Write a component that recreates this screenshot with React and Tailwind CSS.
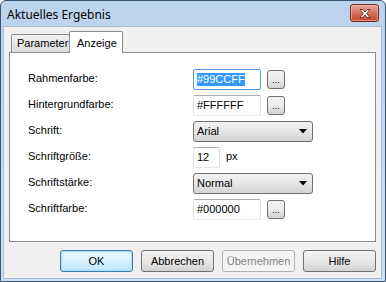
import React from 'react';

const UI = { fontFamily: '"Liberation Sans", Arial, sans-serif' };

function CloseButton() {
  return (
    <div className="mt-[3px] mr-[6px] w-[29px] h-[18px] rounded-[3px] border border-[#6e2b22] bg-gradient-to-b from-[#e9a899] via-[#d4705c] to-[#c5452d] flex items-center justify-center shadow-[inset_0_0_0_1px_rgba(255,210,200,0.5)]">
      <svg width="14" height="11" viewBox="0 0 14 11">
        <path
          d="M2 1.5 L4.8 1.5 L7 4 L9.2 1.5 L12 1.5 L8.6 5.5 L12 9.5 L9.2 9.5 L7 7 L4.8 9.5 L2 9.5 L5.4 5.5 Z"
          fill="#ffffff"
          stroke="#5a2a24"
          strokeWidth="0.9"
          strokeLinejoin="round"
        />
      </svg>
    </div>
  );
}

function TextBox({ value, width = 'w-[68px]', focused = false }) {
  return (
    <div
      className={`${width} h-[21px] rounded-[2px] border bg-white flex items-center px-[3px] text-[11px] text-black ${
        focused ? 'border-[#569de5]' : 'border-t-[#abadb3] border-x-[#dbdfe6] border-b-[#e3e9ef]'
      }`}
    >
      {focused ? <span className="bg-[#3399ff] text-white leading-[13px]">{value}</span> : value}
    </div>
  );
}

function DotsButton() {
  return (
    <div className="ml-[6px] w-[18px] h-[19px] rounded-[3px] border border-[#707070] bg-gradient-to-b from-[#f2f2f2] via-[#ebebeb] to-[#d4d4d4] flex items-end justify-center pb-[3px] text-[9px] leading-none text-black">
      ...
    </div>
  );
}

function Combo({ value }) {
  return (
    <div className="w-[120px] h-[21px] rounded-[3px] border border-[#707070] bg-gradient-to-b from-[#f2f2f2] via-[#e6e6e6] to-[#d3d3d3] flex items-center justify-between pl-[3px] pr-[5px] text-[11px] text-black">
      <span>{value}</span>
      <svg width="8" height="5" viewBox="0 0 8 5">
        <path d="M0 0 L8 0 L4 4.5 Z" fill="#000" />
      </svg>
    </div>
  );
}

function Row({ label, children }) {
  return (
    <div className="flex items-center h-[21px] mb-[5px]">
      <div className="w-[165px] pb-[3px] text-[11px] text-black">{label}</div>
      <div className="flex items-center">{children}</div>
    </div>
  );
}

function DialogButton({ children, variant }) {
  if (variant === 'default') {
    return (
      <div className="w-[73px] h-[22px] rounded-[3px] border border-[#3c7fb1] bg-gradient-to-b from-[#eaf6fd] via-[#d9f0fc] to-[#bee6fd] shadow-[inset_0_0_0_1px_#9fe0fb] flex items-center justify-center text-[11px] text-black">
        {children}
      </div>
    );
  }
  if (variant === 'disabled') {
    return (
      <div className="w-[73px] h-[22px] rounded-[3px] border border-[#adb2b5] bg-[#f4f4f4] flex items-center justify-center text-[11px] text-[#838383]">
        {children}
      </div>
    );
  }
  return (
    <div className="w-[73px] h-[22px] rounded-[3px] border border-[#707070] bg-gradient-to-b from-[#f2f2f2] via-[#e8e8e8] to-[#d2d2d2] flex items-center justify-center text-[11px] text-black">
      {children}
    </div>
  );
}

export default function App() {
  return (
    <div
      className="w-[386px] h-[282px] rounded-t-[6px] border border-[#3d5372] bg-gradient-to-b from-[#bcd3ec] to-[#cfe0f2] flex flex-col overflow-hidden"
      style={UI}
    >
      {/* Title bar */}
      <div className="h-[25px] flex items-start justify-between">
        <div
          className="pl-[6px] pt-[5px] text-[12px] text-black"
          style={{ fontFamily: '"Noto Sans", "Open Sans", sans-serif' }}
        >
          Aktuelles Ergebnis
        </div>
        <CloseButton />
      </div>

      {/* Client area */}
      <div className="flex-1 ml-[2px] mr-[3px] mb-[2px] bg-[#f0f0f0] border border-[#a7bcd6] flex flex-col px-[5px]">
        {/* Tabs */}
        <div className="flex items-end h-[25px] pl-[2px] relative z-10">
          <div className="w-[59px] h-[18px] border border-b-0 border-[#898c95] rounded-t-[2px] bg-gradient-to-b from-[#f2f2f2] to-[#dcdcdc] flex items-center pl-[5px] text-[11px] text-black">
            Parameter
          </div>
          <div className="w-[54px] h-[22px] -ml-[1px] border border-b-0 border-[#898c95] rounded-t-[2px] bg-white flex items-start pt-[3px] pl-[7px] text-[11px] text-black mb-[-1px]">
            Anzeige
          </div>
        </div>

        {/* Panel */}
        <div className="h-[190px] border border-[#898c95] bg-white pt-[16px] pl-[18px]">
          <Row label="Rahmenfarbe:">
            <TextBox value="#99CCFF" focused />
            <DotsButton />
          </Row>
          <Row label="Hintergrundfarbe:">
            <TextBox value="#FFFFFF" />
            <DotsButton />
          </Row>
          <Row label="Schrift:">
            <Combo value="Arial" />
          </Row>
          <Row label="Schriftgröße:">
            <TextBox value="12" width="w-[27px]" />
            <span className="ml-[6px] pb-[3px] text-[11px] text-black">px</span>
          </Row>
          <Row label="Schriftstärke:">
            <Combo value="Normal" />
          </Row>
          <Row label="Schriftfarbe:">
            <TextBox value="#000000" />
            <DotsButton />
          </Row>
        </div>

        {/* Buttons */}
        <div className="flex justify-end gap-[8px] mt-[8px]">
          <DialogButton variant="default">OK</DialogButton>
          <DialogButton>Abbrechen</DialogButton>
          <DialogButton variant="disabled">Übernehmen</DialogButton>
          <DialogButton>Hilfe</DialogButton>
        </div>
      </div>
    </div>
  );
}
